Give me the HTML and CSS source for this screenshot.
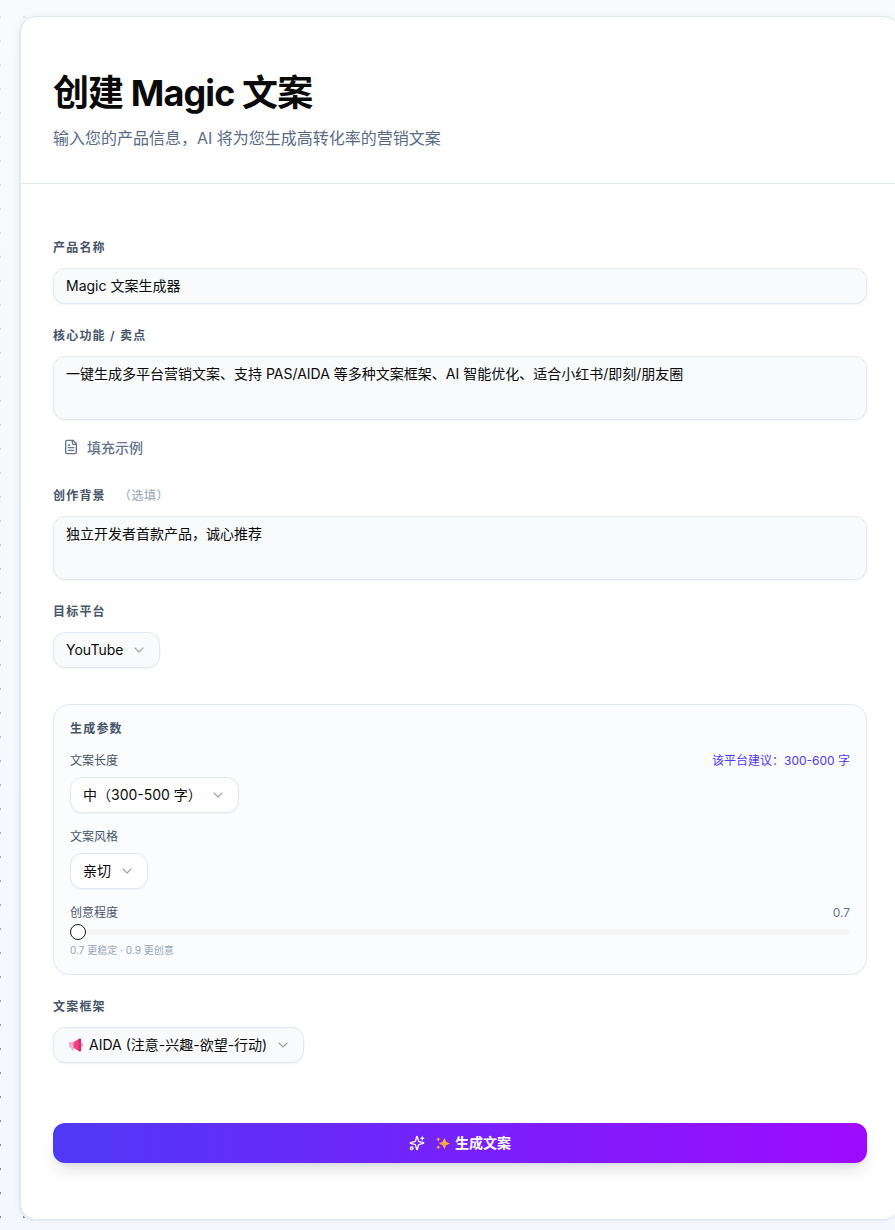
FILE: index.html
```html
<!DOCTYPE html>
<html lang="zh-CN">
<head>
<meta charset="utf-8">
<title>创建 Magic 文案</title>
<link rel="stylesheet" href="styles.css">
</head>
<body>
<div class="rail"></div>
<main class="card">
  <header class="head">
    <h1>创建 Magic 文案</h1>
    <p>输入您的产品信息，AI 将为您生成高转化率的营销文案</p>
  </header>
  <form class="form">
    <div class="label first">产品名称</div>
    <div class="field input">Magic 文案生成器</div>

    <div class="label l2">核心功能 / 卖点</div>
    <div class="field area">一键生成多平台营销文案、支持 PAS/AIDA 等多种文案框架、AI 智能优化、适合小红书/即刻/朋友圈</div>
    <div class="fill">
      <svg class="fill-icon" viewBox="0 0 24 24" fill="none" stroke="currentColor" stroke-width="2" stroke-linecap="round" stroke-linejoin="round"><path d="M15 2H6a2 2 0 0 0-2 2v16a2 2 0 0 0 2 2h12a2 2 0 0 0 2-2V7Z"/><path d="M14 2v4a2 2 0 0 0 2 2h4"/><path d="M10 9H8"/><path d="M16 13H8"/><path d="M16 17H8"/></svg>
      <span>填充示例</span>
    </div>

    <div class="label l3">创作背景<span class="opt">（选填）</span></div>
    <div class="field area">独立开发者首款产品，诚心推荐</div>

    <div class="label l4">目标平台</div>
    <div class="field select">YouTube<svg class="chev" viewBox="0 0 24 24"><path d="m6 9 6 6 6-6"/></svg></div>

    <section class="params">
      <div class="params-title">生成参数</div>
      <div class="row"><span>文案长度</span><span class="hint">该平台建议：300-600 字</span></div>
      <div class="field select white">中（300-500 字）<svg class="chev" viewBox="0 0 24 24"><path d="m6 9 6 6 6-6"/></svg></div>
      <div class="row r2"><span>文案风格</span></div>
      <div class="field select white">亲切<svg class="chev" viewBox="0 0 24 24"><path d="m6 9 6 6 6-6"/></svg></div>
      <div class="row r3"><span>创意程度</span><span class="val">0.7</span></div>
      <div class="slider"><span class="thumb"></span></div>
      <div class="note">0.7 更稳定 · 0.9 更创意</div>
    </section>

    <div class="label l5">文案框架</div>
    <div class="field select">
      <svg class="mega" viewBox="0 0 16 16"><path d="M3 10h2.200l.6 3.500H3.800z" fill="#c4c0d2"/><rect x="1" y="5" width="5" height="5.500" rx=".6" fill="#f4aecb"/><path d="M5.500 5 11 2v12l-5.500-3z" fill="#f0437f"/><rect x="10.500" y="1.500" width="2.600" height="13" rx="1" fill="#e2266b"/><rect x="13" y="6" width="2" height="4" rx=".5" fill="#bdb9cb"/></svg>
      <span class="fw">AIDA (注意-兴趣-欲望-行动)</span><svg class="chev" viewBox="0 0 24 24"><path d="m6 9 6 6 6-6"/></svg>
    </div>

    <button class="go" type="button">
      <svg class="spark" viewBox="0 0 24 24" fill="none" stroke="currentColor" stroke-width="2" stroke-linecap="round" stroke-linejoin="round"><path d="M9.937 15.500A2 2 0 0 0 8.500 14.063l-6.135-1.582a.5.5 0 0 1 0-.962L8.500 9.936A2 2 0 0 0 9.937 8.500l1.582-6.135a.5.5 0 0 1 .963 0L14.063 8.500A2 2 0 0 0 15.500 9.937l6.135 1.581a.5.5 0 0 1 0 .964L15.500 14.063a2 2 0 0 0-1.437 1.437l-1.582 6.135a.5.5 0 0 1-.963 0z"/><path d="M20 3v4"/><path d="M22 5h-4"/><circle cx="4" cy="20" r="2"/></svg>
      <svg class="emoji" viewBox="0 0 16 16"><path d="M10 2l1.900 4.100L16 8l-4.100 1.900L10 14l-1.900-4.100L4 8l4.100-1.900z" fill="#ffa93d"/><path d="M3.500 1l.8 1.700L6 3.500l-1.700.8L3.500 6l-.8-1.700L1 3.500l1.700-.8z" fill="#f79a4e"/><path d="M3.500 9.500l.8 1.700 1.700.8-1.700.8-.8 1.700-.8-1.700L1 12l1.700-.8z" fill="#f79a4e"/></svg>
      <span>生成文案</span>
    </button>
  </form>
</main>
</body>
</html>
```
FILE: styles.css
```css
* { box-sizing: border-box; }
html, body { margin: 0; height: 100%; }
body {
  width: 895px;
  height: 1230px;
  overflow: hidden;
  background: linear-gradient(to bottom, #f8fafc, #f4f8fc);
  font-family: Inter, "Noto Sans CJK SC", sans-serif;
  color: #0f172a;
  padding: 16px 0 0 20px;
  position: relative;
}
.rail {
  position: absolute;
  left: 0; top: 0; bottom: 0;
  width: 30px;
  background-image: radial-gradient(circle at 1px 17px, #80848c 1.300px, transparent 1.500px);
  background-size: 24px 24px;
  background-position: -1px 0;
  -webkit-mask-image: linear-gradient(to bottom, rgba(0,0,0,.15), rgba(0,0,0,.3) 40%, #000);
  mask-image: linear-gradient(to bottom, rgba(0,0,0,.15), rgba(0,0,0,.3) 40%, #000);
}
.card {
  position: relative;
  width: 880px;
  height: 1204px;
  background: #fff;
  border: 1px solid #e2e8f0;
  border-radius: 16px;
  box-shadow: -1px 1px 0 #e4eaf3, -2px 0 5px rgba(148,163,184,.12);
}
.head {
  height: 167px;
  padding: 56px 32px 0;
  border-bottom: 1px solid #e2e8f0;
}
h1 {
  margin: 0;
  font-size: 36px;
  line-height: 40px;
  font-weight: 700;
  color: #0a0a0a;
  letter-spacing: -0.9px;
}
.head p {
  margin: 13px 0 0;
  font-size: 16px;
  line-height: 24px;
  color: #5a6b86;
}
.form { padding: 56px 32px 0; }
.label {
  font-size: 12px;
  line-height: 16px;
  font-weight: 600;
  color: #475569;
  letter-spacing: 1.200px;
}
.l2 { margin-top: 24px; }
.l3 { margin-top: 23px; }
.l4 { margin-top: 24px; }
.l5 { margin-top: 24px; }
.opt { margin-left: 13px; font-weight: 400; color: #94a3b8; letter-spacing: .6px; }
.field {
  margin-top: 12px;
  background: #f8fafc;
  border: 1px solid #e2e8f0;
  border-radius: 12px;
  box-shadow: 0 1px 2px rgba(15,23,42,.05);
  font-size: 14px;
  line-height: 20px;
  color: #0a0a0a;
}
.input { height: 36px; padding: 7px 12px; }
.area { height: 64px; padding: 7px 12px; }
.select {
  display: inline-flex;
  align-items: center;
  height: 36px;
  padding: 0 12px;
  vertical-align: top;
}
.white { background: #fff; }
.chev {
  width: 16px; height: 16px;
  margin-left: 8px;
  fill: none;
  stroke: #a3a3a3;
  stroke-width: 1.700;
  stroke-linecap: round;
  stroke-linejoin: round;
}
.fill {
  display: flex;
  align-items: center;
  height: 36px;
  margin-top: 9px;
  padding-left: 10px;
  font-size: 14px;
  font-weight: 500;
  color: #64748b;
  gap: 8px;
}
.fill-icon { width: 16px; height: 16px; }
.params {
  margin-top: 36px;
  height: 271px;
  padding: 16px 16px 0;
  background: #fbfcfe;
  border: 1px solid #e2e8f0;
  border-radius: 16px;
}
.params-title {
  margin-bottom: 16px;
  font-size: 12px;
  line-height: 16px;
  font-weight: 600;
  color: #475569;
  letter-spacing: 1.200px;
}
.row {
  display: flex;
  justify-content: space-between;
  font-size: 12px;
  line-height: 16px;
  color: #475569;
}
.row + .field { margin-top: 8px; display: inline-flex; }
.r2, .r3 { margin-top: 16px; }
.hint { font-size: 12px; color: #4f39f6; }
.val { color: #64748b; }
.slider {
  position: relative;
  height: 6px;
  margin-top: 8px;
  background: #f5f5f5;
  border-radius: 3px;
}
.thumb {
  position: absolute;
  left: 0; top: -5px;
  width: 16px; height: 16px;
  background: #fff;
  border: 1.500px solid #171717;
  border-radius: 50%;
}
.note { margin-top: 8px; font-size: 10px; line-height: 14px; color: #94a3b8; }
.mega { width: 16px; height: 16px; margin: 0 5px 0 2px; }
.go {
  display: flex;
  align-items: center;
  justify-content: center;
  width: 814px;
  height: 40px;
  margin-top: 60px;
  border: 0;
  border-radius: 12px;
  background: linear-gradient(to right, #4f39f6, #9e0aff);
  box-shadow: 0 10px 15px -3px rgba(15,23,42,.12), 0 4px 6px -4px rgba(15,23,42,.1);
  color: #fff;
  font: 600 14px/20px Inter, "Noto Sans CJK SC", sans-serif;
}
.spark { width: 16px; height: 16px; margin-right: 10px; }
.emoji { width: 15px; height: 15px; margin-right: 5px; }
```
